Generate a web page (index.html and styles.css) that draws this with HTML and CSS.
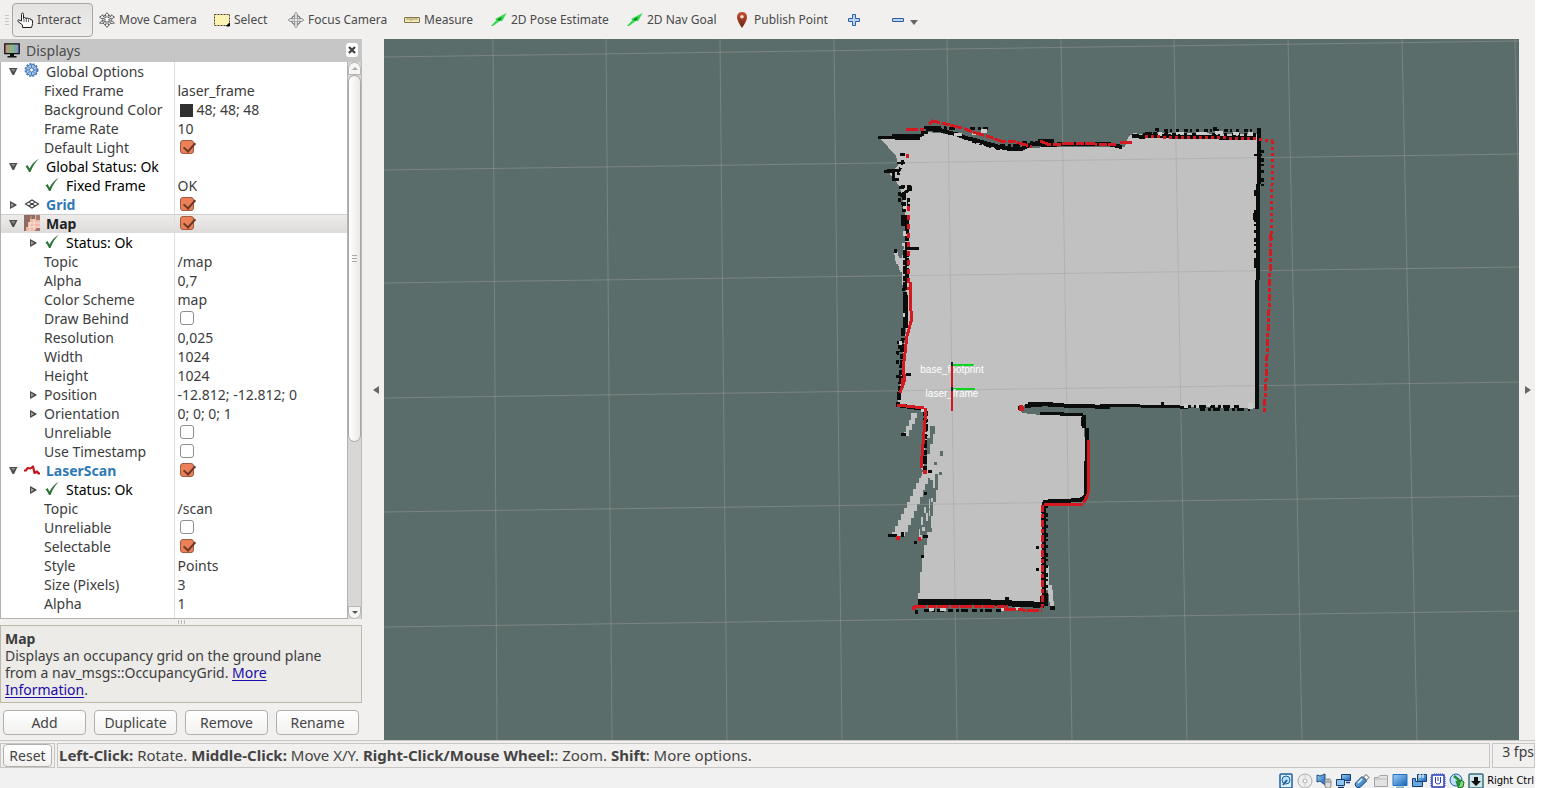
FILE: index.html
```html
<!DOCTYPE html>
<html lang="en">
<head>
<meta charset="utf-8">
<title>RViz</title>
<link rel="stylesheet" href="styles.css">
</head>
<body>
<svg class="defs" aria-hidden="true">
  <defs>
    <linearGradient id="scr" x1="0" x2="1"><stop offset="0" stop-color="#d0837c"/><stop offset=".5" stop-color="#7fbe84"/><stop offset="1" stop-color="#8a88d8"/></linearGradient>
    <linearGradient id="blue" x1="0" y1="0" x2="1" y2="1"><stop offset="0" stop-color="#9fd0f5"/><stop offset="1" stop-color="#1263b8"/></linearGradient>
    <linearGradient id="pin" x1="0" y1="0" x2="0" y2="1"><stop offset="0" stop-color="#c9502f"/><stop offset="1" stop-color="#5e2413"/></linearGradient>
  </defs>
  <symbol id="open" viewBox="0 0 10 10"><path d="M1 1h8.500L6 8H4.500z" fill="#4b4b4b"/><path d="M3 2h4.500L5.300 5z" fill="#8a8a8a"/></symbol>
  <symbol id="closed" viewBox="0 0 10 10"><path d="M2 1v8l6.500-3.500v-1z" fill="#4b4b4b"/><path d="M3 3v4l3-2z" fill="#a0a0a0"/></symbol>
  <symbol id="ok" viewBox="0 0 16 16"><path d="M1.500 8.500l2-1.500 2 3.500C7.500 6.500 10.500 3.500 14.800.8 11 5 8.500 8.500 6.500 14H5C4.100 11.800 3 10 1.500 8.500z" fill="#2b7336"/></symbol>
  <symbol id="gear" viewBox="0 0 16 16"><circle cx="7.500" cy="7" r="5.500" fill="#a9c4e6" stroke="#4a7dbd"/><circle cx="7.500" cy="7" r="6.200" fill="none" stroke="#4a7dbd" stroke-width="1.600" stroke-dasharray="2 1.300"/><circle cx="7.500" cy="7" r="2" fill="#fff" stroke="#4a7dbd"/><path d="M7.500 2v3M7.500 9v3M2.500 7h3M9.500 7h3M4 3.500l2 2M9 8.500l2 2M11 3.500l-2 2M6 8.500l-2 2" stroke="#4a7dbd"/></symbol>
  <symbol id="grid" viewBox="0 0 16 16"><path d="M1.500 8L8 4l6.500 4L8 12zM4.700 6l6.600 4M11.300 6l-6.600 4" fill="none" stroke="#3f3f3f" stroke-width="1.100"/></symbol>
  <symbol id="map" viewBox="0 0 16 16"><path d="M0 0h16v16H0z" fill="#efb9a8"/><path d="M0 0h11v4H6v3H4v5H2v4H0z" fill="#8e6c64"/><path d="M12 0h4v5h-4zM12 13h4v3h-6v-1h2z" fill="#a07b71"/><path d="M6 7v9M10 4v12M4 12h12M6 8h10" stroke="#fbe2d9" fill="none"/><path d="M7 1v3" stroke="#d7a090"/></symbol>
  <symbol id="laser" viewBox="0 0 16 16"><path d="M0 8.500h2l1.500-2.500 3 .5L9 4.500l1.500 6.500 2.500-1.500 1.500 2H16" fill="none" stroke="#c4161c" stroke-width="2.200" stroke-linejoin="round"/></symbol>
  <symbol id="monitor" viewBox="0 0 16 16"><path d="M.8 1.800h14.400v9.900H.8z" fill="url(#scr)" stroke="#111" stroke-width="1.300"/><path d="M6 12h4v2h2.500v1.500h-9V14H6z" fill="#111"/></symbol>
  <symbol id="hand" viewBox="0 0 16 16"><path d="M4.500 9V2.500q0-1.500 1-1.500t1 1.500V6.500q0-.9 1.200-.9T9 6.800q0-.8 1.200-.8t1.300 1.200q0-.7 1.100-.7t1.100 1.200h.3q1.500 0 1.500 1.300v2.500q0 1.500-1 4H5.500V13L1 9.500q-.7-1.300.5-1.700z" fill="#fff" stroke="#1c1c1c"/><path d="M7 7v3M9.300 7v3M11.600 7.500v2.500" stroke="#1c1c1c" stroke-width=".7"/></symbol>
  <symbol id="move" viewBox="0 0 16 16"><path d="M8 .7l2.500 2.800H9v2.300l3-1.500V2.800l3.500 2.400-3.300 2V6L9.600 7.500l2.800 2v-1.300l3 2.800-4 .6v-1.400L9 9v3.500h1.500L8 15.400l-2.500-2.900H7V9l-2.400 1.200v1.400l-4-.6 3-2.800v1.300l2.800-2L3.800 6v1.200L.5 5.200 4 2.800v1.500l3 1.500V3.500H5.500z" fill="#fff" stroke="#4c4c4c" stroke-width=".9"/></symbol>
  <symbol id="select" viewBox="0 0 16 16"><path d="M.5 2.500h15v11H.5z" fill="#fbf3b4" stroke="#4b4627" stroke-dasharray="2 1"/><path d="M15.500 11v3h-3z" fill="#000" stroke="#000"/></symbol>
  <symbol id="focus" viewBox="0 0 16 16"><circle cx="8" cy="8" r="4.500" fill="none" stroke="#777" stroke-width="1.300"/><circle cx="8" cy="8" r="2" fill="none" stroke="#777" stroke-width=".8"/><path d="M6.800 6V1.500L8 .4l1.200 1.100V6M6.800 10v4.500L8 15.600l1.200-1.100V10M6 6.800H1.500L.4 8l1.100 1.200H6M10 6.800h4.500L15.600 8l-1.100 1.200H10" fill="#fff" stroke="#777" stroke-width=".9"/></symbol>
  <symbol id="ruler" viewBox="0 0 16 16"><path d="M.5 5.500h15v5H.5z" fill="#f3e9b8" stroke="#857a4f"/><path d="M3 6v2M5 6v2M7 6v3M9 6v2M11 6v2M13 6v2" stroke="#857a4f" stroke-width=".8"/></symbol>
  <symbol id="arrow" viewBox="0 0 16 16"><path d="M0 14l5.500-6-1.500-1L15.500 1 11 9.500 9.500 8.500 2 14z" fill="#2fdc4c"/><path d="M6 7.500l5-2.500-2 4z" fill="#128027"/></symbol>
  <symbol id="pinicon" viewBox="0 0 16 16"><path d="M8 0q5 0 5 5.500Q13 8.500 8 16 3 8.500 3 5.500 3 0 8 0z" fill="url(#pin)"/><circle cx="8" cy="4.800" r="1.800" fill="#f3dcd4"/></symbol>
  <symbol id="plus" viewBox="0 0 12 12"><path d="M4.500.5h3v4h4v3h-4v4h-3v-4h-4v-3h4z" fill="#b5d2f3" stroke="#315f9f"/></symbol>
  <symbol id="minus" viewBox="0 0 12 12"><path d="M.5 4.500h11v3H.5z" fill="#b5d2f3" stroke="#315f9f"/></symbol>
</svg>

<div class="app">
  <nav class="toolbar" aria-label="Tools">
    <span class="grip"></span>
    <button class="tool w-interact active"><svg><use href="#hand"/></svg>Interact</button>
    <button class="tool w-move"><svg><use href="#move"/></svg>Move Camera</button>
    <button class="tool w-select"><svg><use href="#select"/></svg>Select</button>
    <button class="tool w-focus"><svg><use href="#focus"/></svg>Focus Camera</button>
    <button class="tool w-measure"><svg><use href="#ruler"/></svg>Measure</button>
    <button class="tool w-pose"><svg><use href="#arrow"/></svg>2D Pose Estimate</button>
    <button class="tool w-goal"><svg><use href="#arrow"/></svg>2D Nav Goal</button>
    <button class="tool w-point"><svg><use href="#pinicon"/></svg>Publish Point</button>
    <button class="tool small" aria-label="Add tool"><svg><use href="#plus"/></svg></button>
    <button class="tool small" aria-label="Remove tool"><svg><use href="#minus"/></svg><span class="caret"></span></button>
  </nav>

  <div class="main">
    <section class="panel">
      <header class="panel-head"><svg><use href="#monitor"/></svg><span>Displays</span><button class="close" aria-label="Close"><svg viewBox="0 0 8 8"><path d="M1 1l6 6M7 1L1 7" stroke="#444" stroke-width="2.400"/></svg></button></header>
      <div class="tree-box">
        <div class="tree-clip">
          <table class="tree">
            <tr class="top"><td><svg><use href="#open"/></svg><svg class="ic"><use href="#gear"/></svg>Global Options</td><td></td></tr>
            <tr><td>Fixed Frame</td><td>laser_frame</td></tr>
            <tr><td>Background Color</td><td><i class="swatch"></i>48; 48; 48</td></tr>
            <tr><td>Frame Rate</td><td>10</td></tr>
            <tr><td><label for="c1">Default Light</label></td><td><input type="checkbox" id="c1" checked></td></tr>
            <tr class="top status"><td><svg><use href="#open"/></svg><svg class="ic"><use href="#ok"/></svg>Global Status: Ok</td><td></td></tr>
            <tr class="sub status"><td><svg class="ic"><use href="#ok"/></svg>Fixed Frame</td><td>OK</td></tr>
            <tr class="top display"><td><svg><use href="#closed"/></svg><svg class="ic"><use href="#grid"/></svg><label for="c2">Grid</label></td><td><input type="checkbox" id="c2" checked></td></tr>
            <tr class="top display selected"><td><svg><use href="#open"/></svg><svg class="ic"><use href="#map"/></svg><label for="c3">Map</label></td><td><input type="checkbox" id="c3" checked></td></tr>
            <tr class="sub status branch"><td><svg><use href="#closed"/></svg><svg class="ic"><use href="#ok"/></svg>Status: Ok</td><td></td></tr>
            <tr><td>Topic</td><td>/map</td></tr>
            <tr><td>Alpha</td><td>0,7</td></tr>
            <tr><td>Color Scheme</td><td>map</td></tr>
            <tr><td><label for="c4">Draw Behind</label></td><td><input type="checkbox" id="c4"></td></tr>
            <tr><td>Resolution</td><td>0,025</td></tr>
            <tr><td>Width</td><td>1024</td></tr>
            <tr><td>Height</td><td>1024</td></tr>
            <tr class="branch"><td><svg><use href="#closed"/></svg>Position</td><td>-12.812; -12.812; 0</td></tr>
            <tr class="branch"><td><svg><use href="#closed"/></svg>Orientation</td><td>0; 0; 0; 1</td></tr>
            <tr><td><label for="c5">Unreliable</label></td><td><input type="checkbox" id="c5"></td></tr>
            <tr><td><label for="c6">Use Timestamp</label></td><td><input type="checkbox" id="c6"></td></tr>
            <tr class="top display"><td><svg><use href="#open"/></svg><svg class="ic"><use href="#laser"/></svg><label for="c7">LaserScan</label></td><td><input type="checkbox" id="c7" checked></td></tr>
            <tr class="sub status branch"><td><svg><use href="#closed"/></svg><svg class="ic"><use href="#ok"/></svg>Status: Ok</td><td></td></tr>
            <tr><td>Topic</td><td>/scan</td></tr>
            <tr><td><label for="c8">Unreliable</label></td><td><input type="checkbox" id="c8"></td></tr>
            <tr><td><label for="c9">Selectable</label></td><td><input type="checkbox" id="c9" checked></td></tr>
            <tr><td>Style</td><td>Points</td></tr>
            <tr><td>Size (Pixels)</td><td>3</td></tr>
            <tr><td>Alpha</td><td>1</td></tr>
            <tr><td></td><td></td></tr>
          </table>
        </div>
        <div class="scrollbar"><span class="step up"></span><span class="thumb"></span><span class="rest"></span><span class="step down"></span></div>
      </div>
      <div class="splitter"></div>
      <div class="about"><b>Map</b><br>Displays an occupancy grid on the ground plane from a nav_msgs::OccupancyGrid. <a href="#">More Information</a>.</div>
      <div class="actions"><button class="btn">Add</button><button class="btn">Duplicate</button><button class="btn">Remove</button><button class="btn">Rename</button></div>
    </section>
    <button class="side left" aria-label="Hide left panel"><svg viewBox="0 0 6 8"><path d="M6 0v8L0 4z" fill="#666"/></svg></button>
    <svg class="view" viewBox="384 39 1135 701" preserveAspectRatio="xMidYMid slice" role="img" aria-label="Map view">
      <path class="free" d="M880 138L922 137L926 132L948 134L985 143L1010 149L1050 147L1125 147L1128 137L1134 133L1150 136L1160 133L1258 134L1258 408L1025 405L1020 407L1022 413L1040 415L1084 416L1086 498L1043 502L1043 566L1049 566L1049 585L1052 585L1054 606H1050L1048 590L1044 590V605L918 603V593H920V572H922V556H924V545H927V532H929V510H931V498H933V480H930V476L927 472L921 469L927 410L898 405L901 375L906 330V290L902 284V272H900L898 264H896L894 252L897 250L899 258H902L905 240V210L900 188L896 181L890 174L898 165L896 156z"/>
      <path class="free" d="M923 470h7v8h-2v6h-3v6h-2v7h-3v7h-3v7h-3v7h-3v7h-3v7h-3v4h-13v-4h3v-6h3v-6h3v-6h3v-6h3v-6h3v-6h3v-7h3v-6h3v-5h2zM911 413h6v5h-2v6h-3v6h-3v6h-5v-4h2v-6h3v-6h2zM928 497h2v12h-2v12h-3v10h-3v8h-3v-10h2v-12h3v-10h3z"/>
      <path class="unknown" d="M930 426h5v8h-2v10h-3v10h-3v12h-3v-16h3v-12h3zM935 474h3v16h-2v12h-3v14h-2v12h-3v-12h2v-14h3v-14h2zM931 483h-3v14h-2v16h-3v12h-3v10h2v-8h4v-14h3v-14h2zM940 451h3v5h-3zM934 462h3v3h-3zM939 472h3v3h-3zM929 528h3v4h-3zM925 444h2v8h-2zM1024 408L1044 411 1084 414 1260 411 1040 408z"/>
      <g class="lines">
        <path d="M493 39L497 740M606 39L612 740M720 39L727 740M834 39L842 740M947 39L957 740M1061 39L1072 740M1174 39L1187 740M1288 39L1302 740M1402 39L1417 740M1515 39L1532 740"/>
        <path d="M384 57L1519 41M384 170L1519 154M384 283L1519 267M384 398L1519 382M384 512L1519 496M384 627L1519 611"/>
      </g>
      <g class="wall">
        <path stroke-width="3" d="M878 137H898M892 135H922M895 138H920M922 136V132H928M928 126V130M1040 413H1064M1060 414H1083M884 171H892M887 170H900M893 171V179H899M905 248H919"/>
        <path stroke-width="4" d="M926 129L940 130L950 133L956 134L966 138L975 140L985 143L1000 147L1010 149L1022 149L1032 144L1050 145L1064 144L1108 144L1122 147M1038 141h16M1132 136L1145 137M1150 132V138M1143 135L1180 137L1256 138M1259 131V184M1258 184V270L1257 290V409M1025 406L1048 404M1048 405L1110 407M1084 415V428M1087 428L1086 496L1080 500L1043 502M1044 502V604M896 405L925 409"/>
        <path stroke-width="3" d="M1100 405L1180 407L1188 408M1028 403h25M924 128L940 127"/>
        <path stroke-width="6" d="M918 602L980 602L1044 605"/>
        <path stroke-width="8" d="M905 215V226M1044 596V606"/>
        <path stroke-width="5" d="M905 295V328M1083 417V426M1255 213V220M1256 190V196"/>
        <path stroke-width="3" stroke-dasharray="5 3 3 2 7 4" d="M936 127L955 129M970 128H988M1186 406L1240 407M1200 409L1250 409M924 610h80M926 411L927 436M899 187L908 188M903 160L898 175M1048 500h34M972 141l28 8M1000 145l24 1M1022 142h20"/>
        <path stroke-width="3" stroke-dasharray="3 5 4 2 2 4" d="M1145 133H1170M1156 130L1256 131M1164 134L1256 134M1262 150V190M1255 210V265M1042 510V596M1046 505V596"/>
        <path stroke-width="4" stroke-dasharray="8 2 5 1" d="M904 192V212M907 226V282M905 250L905 300M903 328L901 378L898 405M925 408V470"/>
        <path stroke-width="3" stroke-dasharray="4 2" d="M901 203H908M900 196L910 189M903 232h6M900 345l-3 10M897 360v6M896 376h12M901 186h10M899 192v10M908 198v8"/>
        <path fill="#0b0d0d" stroke="none" d="M900 153h5v3h-5zM897 162h8v2h-8zM908 186h4v5h-4zM894 249h3v4h-3zM902 288h3v3h-3zM897 341h4v3h-4zM906 373h5v3h-5zM888 534h9v3h-9zM901 532h3v5h-3zM914 541h3v3h-3zM923 535h5v3h-5zM921 555h3v3h-3zM924 492h3v3h-3zM901 433h5v3h-5zM928 470h4v3h-4zM915 610h3v4h-3zM1036 546h3v3h-3zM1036 568h3v3h-3zM1050 606h5v4h-5zM1257 128h4v7h-4zM1254 262h5v6h-5zM1254 154h8v2h-8zM1213 127h4v4h-4zM1018 406h4v4h-4zM1161 402h3v3h-3zM1005 600h4v-3h-4zM1155 128h4v3h-4z"/>
      </g>
      <path class="speck" d="M972 132h8v3h-8zM981 129h6v4h-6zM954 133h8v3h-8zM1158 132h4v4h-4zM1176 132h8v2h-8zM1196 132h11v3h-11zM1215 131h8v3h-8zM1233 132h6v3h-6zM1248 132h5v4h-5zM1248 403h5v6h-5zM1184 404h4v4h-4zM1196 404h3v4h-3zM1208 403h3v3h-3zM903 231h3v5h-3zM903 206h3v3h-3zM902 243h3v3h-3zM903 313h2v4h-2zM899 341h3v4h-3zM921 406h4v6h-4zM929 608h5v3h-5zM940 608h6v3h-6zM1001 607h4v4h-4zM1015 607h5v3h-5z"/>
      <g class="scan">
        <path stroke-width="3" d="M910 282V303L912 318L907 336L903 370L905 379L900 393M897 405L924 408M926 408L921 468M1089 440L1088 494L1084 503M1083 504H1044M902 378v10"/>
        <path stroke-width="3" stroke-dasharray="12 2 8 1" d="M906 129H924M929 124L933 121L950 125L962 128L976 133L990 137L1003 142L1012 141L1026 145L1032 147M1040 141L1050 145L1074 143L1116 145M1120 142L1133 143M914 606L1008 607M1004 609L1042 611"/>
        <path stroke-width="3" stroke-dasharray="3 3" d="M1145 136L1175 138L1200 137L1256 139L1273 141M1273 141L1272 185L1271 240"/>
        <path stroke-width="3" stroke-dasharray="7 2 4 2" d="M1271 234L1269 310L1266 380L1264 414M1043 505L1042 608"/>
        <path stroke-width="3" stroke-dasharray="5 4" d="M908 206V290"/>
        <path stroke-width="4" d="M906 156h3M923 472h4M896 538h4M918 539h3M1021 405v6M1020 409h4M914 606v4"/>
      </g>
      <g class="axes"><path stroke="#0ad51d" stroke-width="2" d="M952 365H974M952 389H975"/><text x="952" y="373">base_footprint</text><text x="952" y="397">laser_frame</text><path stroke="#d41420" stroke-width="2" d="M952 366V411"/><path stroke="#223" stroke-width="2" d="M952 362v4M952 387v4"/></g>
    </svg>
    <button class="side right" aria-label="Hide right panel"><svg viewBox="0 0 6 8"><path d="M0 0v8l6-4z" fill="#666"/></svg></button>
  </div>

  <footer class="status-bar">
    <div class="cell"><button class="btn reset">Reset</button></div>
    <p class="cell hint"><b>Left-Click:</b> Rotate. <b>Middle-Click:</b> Move X/Y. <b>Right-Click/Mouse Wheel:</b>: Zoom. <b>Shift</b>: More options.</p>
    <div class="cell fps">3 fps</div>
  </footer>
</div>
<div class="vm-bar">
  <svg viewBox="0 0 16 16"><rect x="2" y="1" width="12" height="14" rx="1" fill="#dff0ff" stroke="#1c5fa0" stroke-width="1.500"/><circle cx="8" cy="7" r="4" fill="#bfe0fa" stroke="#1c5fa0"/><path d="M5 12l4-5" stroke="#1c5fa0" stroke-width="2"/></svg>
  <svg viewBox="0 0 16 16"><circle cx="8" cy="8" r="7" fill="#eee" stroke="#aaa"/><circle cx="8" cy="8" r="2" fill="#fff" stroke="#aaa"/><path d="M8 1v4M8 11v4" stroke="#ccc"/></svg>
  <svg viewBox="0 0 16 16"><path d="M1 2v7l3-1 5 4V1L4 3z" fill="url(#blue)" stroke="#1c4f88"/><rect x="9" y="6" width="6" height="9" rx="2" fill="#ddd" stroke="#888"/><path d="M9 9h6M12 6v3" stroke="#888"/></svg>
  <svg viewBox="0 0 16 16"><path d="M6.500 1.500h9v6h-9z" fill="url(#blue)" stroke="#153f74"/><path d="M1.500 6.500h8v6h-8z" fill="#8ec2ef" stroke="#153f74"/><path d="M3 14.500h6M11 9.500h4" stroke="#153f74" stroke-width="1.500"/></svg>
  <svg viewBox="0 0 16 16"><path d="M1.500 10l6.500-6.500 4.500 4.500L6 14.500q-2 1-3.800-.8T1.500 10z" fill="url(#blue)" stroke="#153f74"/><path d="M9.500 4l2.500-2.500L15 4.500 12.500 7z" fill="#fff" stroke="#555"/><path d="M4 10l4-4" stroke="#e8f5ff" stroke-width="1.500"/></svg>
  <svg viewBox="0 0 16 16"><path d="M1.500 13.500v-9h4l1.500-2h7.500v11z" fill="#e2e2e2" stroke="#a4a4a4"/><path d="M2 6h12" stroke="#bbb"/></svg>
  <svg viewBox="0 0 16 16"><path d="M1 1.500h14v11H1z" fill="url(#blue)" stroke="#2575c4"/><path d="M4 14.500h8" stroke="#8ab" stroke-width="2"/></svg>
  <svg viewBox="0 0 16 16"><path d="M6.500 1.500h9v7h-9z" fill="url(#blue)" stroke="#153f74"/><path d="M1.500 5.500h3v3h7v5h-10z" fill="#6ba8e2" stroke="#153f74"/><path d="M9 1v4M12 1v4" stroke="#fff"/></svg>
  <svg viewBox="0 0 16 16"><rect x="2" y="2" width="12" height="12" fill="#fff" stroke="#2c3dbb" stroke-width="1.500"/><path d="M1 4v9M15 4v9M4 1h9M4 15h9" stroke="#2c3dbb" stroke-dasharray="1 1"/><path d="M5.500 4v5q0 2 2.500 2t2.500-2V4M8 4v4" fill="none" stroke="#2c3dbb"/></svg>
  <svg viewBox="0 0 16 16"><circle cx="7" cy="7" r="6" fill="#bfe0fa" stroke="#1c5fa0"/><path d="M5 3l6 5-3 1 2 5" fill="none" stroke="#2a8c30" stroke-width="2.500"/><path d="M9 15l5-1 1-5-3-2z" fill="#7ddc7f" stroke="#1d6f25"/></svg>
  <svg viewBox="0 0 16 16"><rect x="1" y="1" width="14" height="14" rx="1" fill="#cfe6ea" stroke="#3b6f7a" stroke-width="1.500"/><path d="M6 4h4v4h3l-5 5-5-5h3z" fill="#111"/></svg>
  <span>Right Ctrl</span>
</div>
</body>
</html>
```
FILE: styles.css
```css
* { box-sizing: border-box; }
body {
  margin: 0;
  height: 100vh;
  padding-right: 7px;
  display: flex;
  flex-direction: column;
  background: #fff;
  color: #3c3c3c;
  font: 14px/17px "Noto Sans", "Open Sans", sans-serif;
}
button, input { font: inherit; color: inherit; margin: 0; }
button { padding: 0; border: 0; background: none; }
.defs { position: absolute; width: 0; height: 0; }
.app { flex: 1; min-height: 0; display: flex; flex-direction: column; background: #f1f0ef; }

.toolbar { height: 39px; flex: none; display: flex; align-items: center; padding-left: 5px; font: 12px/16px "Noto Sans", sans-serif; }
.grip { width: 4px; height: 10px; margin-right: 3px; background: repeating-linear-gradient(#c4c4c4 0 1px, transparent 1px 3px); }
.tool { display: flex; align-items: center; gap: 4px; flex: none; height: 34px; white-space: nowrap; color: #4a4a4a; }
.tool svg { width: 16px; height: 16px; flex: none; }
.active { border: 1px solid #a9a7a4; border-radius: 4px; padding-left: 4px; background: linear-gradient(#e4e2e0, #efeeec); }
.w-interact { width: 81px; margin-right: 6px; }
.w-move { width: 115px; }
.w-select { width: 74px; }
.w-focus { width: 116px; }
.w-measure { width: 87px; }
.w-pose { width: 136px; }
.w-goal { width: 107px; }
.w-point { width: 114px; }
.small { width: 44px; gap: 6px; }
.small svg { width: 12px; height: 12px; }
.caret { border: 4px solid transparent; border-top: 5px solid #666; border-bottom: 0; margin-top: 6px; }

.main { flex: 1; min-height: 0; display: flex; }
.panel { width: 362px; flex: none; display: flex; flex-direction: column; }
.panel-head { height: 23px; flex: none; display: flex; align-items: center; gap: 6px; padding: 0 4px 1px; background: #c6c6c6; color: #4c4c4c; }
.panel-head > svg { width: 16px; height: 16px; }
.close { width: 12px; height: 14px; margin-left: auto; border-radius: 3px; background: #fff; display: flex; align-items: center; justify-content: center; }
.close svg { width: 8px; height: 8px; }
.tree-box { flex: 1; min-height: 0; display: flex; }
.tree-clip { flex: 1; overflow: hidden; background: #fff; border: 1px solid #b4b2af; border-top: 0; }
.tree { width: 100%; table-layout: fixed; border-collapse: collapse; }
.tree td { height: 19px; padding: 0 0 0 3px; line-height: 19px; white-space: nowrap; vertical-align: middle; }
.tree td:first-child { width: 173px; padding-left: 43px; border-right: 1px solid #dedede; }
.tree svg { width: 10px; height: 10px; vertical-align: 0; }
.tree svg.ic { width: 16px; height: 16px; margin: 0 6px 0 5px; vertical-align: -2px; }
.tree .top td:first-child { padding-left: 7px; }
.tree .top svg.ic { margin-left: 6px; }
.tree .sub td:first-child { padding-left: 38px; }
.tree .branch td:first-child { padding-left: 27px; }
.tree .branch svg:first-child { margin-right: 6px; }
.tree .branch.sub svg:first-child { margin-right: 1px; }
.status td:first-child { color: #000; }
.display label { font-weight: bold; color: #2f79b8; }
.selected { background: linear-gradient(#eeedec, #dcdbda); box-shadow: inset 0 1px #cfcecc; }
.selected label { color: #222; }
.swatch { display: inline-block; width: 13px; height: 13px; margin: 0 4px 0 2px; background: #303030; vertical-align: -2px; }
.tree input { appearance: none; display: block; position: relative; width: 14px; height: 14px; margin: 0 0 2px 2px; border: 1px solid #918d89; border-radius: 3px; background: #fff; }
.tree input:checked { background: #ec8059; border-color: #a05a3e; }
.tree input:checked::after { content: ""; position: absolute; left: 5px; top: -1px; width: 5px; height: 10px; border: solid #6b3826; border-width: 0 2px 2px 0; transform: rotate(42deg); }

.scrollbar { width: 14px; display: flex; flex-direction: column; background: #d8d7d5; border-right: 1px solid #bbb9b6; }
.step { height: 13px; display: flex; align-items: center; justify-content: center; background: #f5f5f4; border: 1px solid #b9b7b4; }
.step::after { content: ""; border: 3px solid transparent; }
.up { border-radius: 7px 7px 0 0; }
.up::after { border-bottom-color: #aaa; border-top: 0; }
.down { border-radius: 0 0 7px 7px; }
.down::after { border-top-color: #555; border-bottom: 0; }
.thumb { flex: 366; border: 1px solid #a9a7a4; border-radius: 7px; display: flex; align-items: center; justify-content: center; background: linear-gradient(90deg, #fff, #eae9e8); }
.thumb::after { content: ""; width: 5px; height: 7px; background: repeating-linear-gradient(#aaa 0 1px, transparent 1px 3px); }
.rest { flex: 165; }
.splitter { height: 6px; flex: none; background: repeating-linear-gradient(90deg, #bbb 0 1px, transparent 1px 3px) center / 7px 4px no-repeat; }
.about { flex: none; min-height: 78px; padding: 4px 20px 4px 4px; border: 1px solid #bdb8a9; background: #edebe7; }
.about a { color: #1a0dab; text-underline-offset: 2px; }
.actions { display: grid; grid-template-columns: repeat(4, 1fr); gap: 8px; padding: 7px 3px 5px; flex: none; }
.btn { height: 25px; border: 1px solid #b2b0ad; border-radius: 4px; background: linear-gradient(#fff, #f2f1f0); color: #444; }
.side { flex: none; display: flex; align-items: center; }
.side svg { width: 6px; height: 8px; }
.left { width: 22px; padding-left: 11px; }
.right { width: 16px; padding-left: 6px; }

.view { flex: 1; min-width: 0; height: 100%; background: #5b6d6a; }
.free { fill: #c1c1c1; shape-rendering: crispEdges; }
.unknown { fill: #5b6d6a; shape-rendering: crispEdges; }
.speck { fill: #c9cccb; }
.lines { stroke: #a0a0a0; stroke-opacity: .45; fill: none; }
.wall { stroke: #0b0d0d; fill: none; shape-rendering: crispEdges; }
.scan { stroke: #d41a20; fill: none; shape-rendering: crispEdges; }
.axes text { font: 10px "Liberation Sans", Arial, sans-serif; fill: #fff; text-anchor: middle; }

.status-bar { height: 28px; flex: none; display: flex; gap: 2px; padding: 2px 0 0; border-top: 1px solid #c8c6c4; }
.cell { border: 1px solid #c8c6c4; margin: 0; display: flex; align-items: center; }
.reset { width: 49px; height: 23px; margin: 0 2px; }
.hint { flex: 1; padding-left: 1px; white-space: pre; color: #444; font-size: 15px; }
.fps { width: 43px; padding-bottom: 8px; justify-content: flex-end; }
.vm-bar { height: 20px; flex: none; display: flex; align-items: center; justify-content: flex-end; gap: 3px; padding: 5px 1px 0 0; background: #f1f1f1; color: #000; font: 11px/14px "DejaVu Sans Condensed", sans-serif; }
.vm-bar svg { width: 16px; height: 16px; }
```
